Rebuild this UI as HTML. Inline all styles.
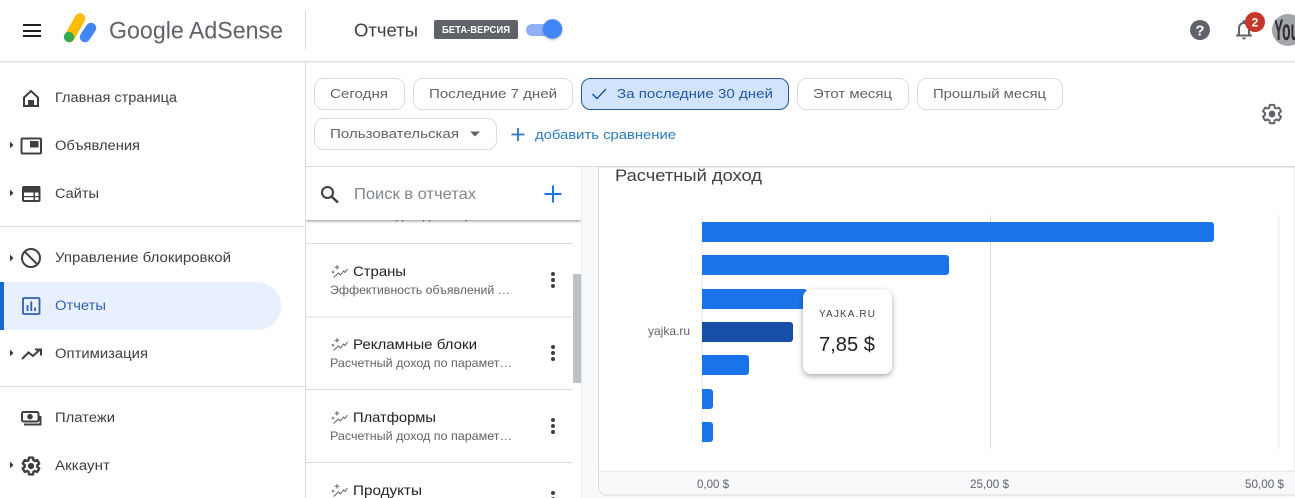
<!DOCTYPE html>
<html lang="ru"><head><meta charset="utf-8"><title>Google AdSense</title>
<style>
html,body{margin:0;padding:0;background:#fff;width:1295px;height:498px;overflow:hidden}
svg{display:block}
text{font-family:"Liberation Sans","Noto Sans CJK JP",sans-serif}
.nav{font-size:13.5px;fill:#3c4043}
.chip{font-size:13px;fill:#5f6368}
.ttl{font-size:14px;fill:#202124}
.sub{font-size:12px;fill:#5f6368}
.ax{font-size:12px;fill:#5f6368}
.cb{fill:#fff;stroke:#dadce0}
.bar{fill:#1a73e8}
.ic{fill:none;stroke:#3c4043;stroke-width:2}
.f{fill:#3c4043}
</style></head><body>
<svg xmlns="http://www.w3.org/2000/svg" width="1295" height="498" viewBox="0 0 1295 498">
<defs>
<filter id="sh" x="-30%" y="-30%" width="160%" height="170%"><feDropShadow dx="0" dy="2" stdDeviation="3" flood-color="#000" flood-opacity=".35"/></filter>
<filter id="sb" x="-5%" y="-20%" width="110%" height="150%"><feDropShadow dx="0" dy="1.5" stdDeviation="1.2" flood-color="#000" flood-opacity=".35"/></filter>
<filter id="kn" x="-50%" y="-50%" width="200%" height="200%"><feDropShadow dx="0" dy="1" stdDeviation="1.2" flood-color="#000" flood-opacity=".3"/></filter>
<clipPath id="av"><circle cx="1288" cy="30" r="16"/></clipPath>
<clipPath id="sbc"><rect x="306" y="220" width="275" height="8"/></clipPath>
<symbol id="spk" viewBox="0 0 16 13" overflow="visible">
<path d="M1.500 12.500L6.500 8l2 2 3-4 1.500 1.500L15.500 4" fill="none" stroke="#5f6368" stroke-width="1"/>
<path d="M5 0v4.600M2.700 2.300h4.600M1 5.800v2.600M-.3 7.100h2.600" fill="none" stroke="#5f6368" stroke-width="1"/>
</symbol>
<path id="gear" d="M19.14 12.94c.04-.3.06-.61.06-.94 0-.32-.02-.64-.07-.94l2.03-1.58c.18-.14.23-.41.12-.61l-1.92-3.32c-.12-.22-.37-.29-.59-.22l-2.39.96c-.5-.38-1.03-.7-1.62-.94l-.36-2.54c-.04-.24-.24-.41-.48-.41h-3.84c-.24 0-.43.17-.47.41l-.36 2.54c-.59.24-1.13.57-1.62.94l-2.39-.96c-.22-.08-.47 0-.59.22L2.74 8.87c-.12.21-.08.47.12.61l2.03 1.58c-.05.3-.09.63-.09.94s.02.64.07.94l-2.03 1.58c-.18.14-.23.41-.12.61l1.92 3.32c.12.22.37.29.59.22l2.39-.96c.5.38 1.03.7 1.62.94l.36 2.54c.05.24.24.41.48.41h3.84c.24 0 .44-.17.47-.41l.36-2.54c.59-.24 1.13-.56 1.62-.94l2.39.96c.22.08.47 0 .59-.22l1.92-3.32c.12-.22.07-.47-.12-.61l-2.01-1.58z"/>
</defs>

<!-- header -->
<rect x="0" y="61" width="1295" height="1.300" fill="#dadce0"/>
<rect x="305" y="10" width="1" height="40" fill="#dadce0"/>
<rect x="23" y="24" width="18" height="2" fill="#202124"/><rect x="23" y="30" width="18" height="2" fill="#202124"/><rect x="23" y="35" width="18" height="2" fill="#202124"/>
<line x1="80" y1="18.500" x2="69.500" y2="37" stroke="#fbbc04" stroke-width="10.500" stroke-linecap="round"/>
<circle cx="69" cy="37" r="5.200" fill="#34a853"/>
<line x1="91" y1="28" x2="85" y2="37" stroke="#4285f4" stroke-width="10.500" stroke-linecap="round"/>
<text x="109" y="38.500" font-size="24" fill="#5f6368" textLength="174" lengthAdjust="spacingAndGlyphs">Google AdSense</text>
<text x="354" y="36.500" font-size="18" fill="#3c4043" textLength="64" lengthAdjust="spacingAndGlyphs">Отчеты</text>
<rect x="434" y="20" width="84" height="19" rx="2" fill="#5f6368"/>
<text x="442" y="33" font-size="10" font-weight="bold" fill="#fff" textLength="68" lengthAdjust="spacingAndGlyphs">БЕТА-ВЕРСИЯ</text>
<rect x="526" y="24" width="30" height="12" rx="6" fill="#8fb1f5"/>
<circle cx="552.500" cy="29" r="9.700" fill="#4285f4" filter="url(#kn)"/>
<circle cx="1200" cy="30" r="10" fill="#5f6368"/>
<text x="1200" y="35.500" font-size="15" font-weight="bold" fill="#fff" text-anchor="middle">?</text>
<g transform="translate(1232,17.500)"><path fill="#5f6368" d="M12 22c1.100 0 2-.9 2-2h-4c0 1.100.9 2 2 2zm6-6v-5c0-3.070-1.630-5.640-4.500-6.320V4c0-.83-.67-1.500-1.500-1.500s-1.500.67-1.500 1.500v.68C7.640 5.360 6 7.920 6 11v5l-2 2v1h16v-1l-2-2zm-2 1H8v-6c0-2.480 1.510-4.500 4-4.500s4 2.020 4 4.500v6z"/></g>
<circle cx="1255" cy="22" r="10" fill="#c5362b"/>
<text x="1255" y="26.500" font-size="12" font-weight="bold" fill="#fff" text-anchor="middle">2</text>
<circle cx="1288" cy="30" r="16" fill="#a2a5a9"/>
<g clip-path="url(#av)"><text x="1274" y="40" font-size="30" font-weight="bold" fill="#2e2e2e" textLength="25" lengthAdjust="spacingAndGlyphs">You</text></g>

<!-- sidebar -->
<rect x="305" y="62" width="1" height="436" fill="#dadce0"/>
<rect x="0" y="226" width="305" height="1" fill="#dadce0"/>
<rect x="0" y="386" width="305" height="1" fill="#dadce0"/>
<path d="M0 282H257a24 24 0 0 1 0 48H0z" fill="#e8f0fe"/>
<rect x="0" y="282" width="4" height="48" fill="#1967d2"/>

<path d="M10 141.500l3.500 3.500-3.500 3.500zM10 189.500l3.500 3.500-3.500 3.500zM10 254.500l3.500 3.500-3.500 3.500zM10 349.500l3.500 3.500-3.500 3.500zM10 461.500l3.500 3.500-3.500 3.500z" fill="#3c4043"/>

<path class="ic" d="M24 106V97.500L31 91l7 6.500V106z"/><rect class="f" x="28" y="100" width="6" height="7"/>
<rect class="ic" x="21.500" y="138.500" width="19.500" height="15" rx="1"/><rect class="f" x="30" y="141" width="8.500" height="6.500"/>
<rect class="ic" x="23" y="187" width="16.500" height="14" rx="1"/><rect class="f" x="23" y="186" width="17" height="6.500"/><rect class="f" x="33.500" y="192" width="1.400" height="9"/><rect class="f" x="23" y="196" width="17" height="1.200"/>
<circle class="ic" cx="31" cy="258" r="9" stroke-width="2.200"/><line class="ic" x1="24.800" y1="251.800" x2="37.200" y2="264.200" stroke-width="2.200"/>
<rect x="23" y="298" width="16.500" height="16" rx="1" fill="none" stroke="#2f5fb3" stroke-width="1.800"/>
<path d="M27.500 311v-6M31.300 311v-9.500M35 311v-3.500" stroke="#2f5fb3" stroke-width="1.800" fill="none"/>
<path class="ic" d="M22 359l6.500-6.500 4.500 3.500 7-6.500M35 349.500h6v6"/>
<rect class="ic" x="22" y="412" width="16.500" height="9.500" rx="1.500"/><circle class="f" cx="30" cy="416.700" r="2.800"/><path class="ic" d="M24 424.500h16.500V416"/>
<g transform="translate(20.500,455.500) scale(.875)"><use href="#gear" fill="none" stroke="#3c4043" stroke-width="2.700"/><circle cx="12" cy="12" r="3.600" fill="#3c4043"/></g>

<text class="nav" x="55" y="102" textLength="122" lengthAdjust="spacingAndGlyphs">Главная страница</text>
<text class="nav" x="55" y="150" textLength="85" lengthAdjust="spacingAndGlyphs">Объявления</text>
<text class="nav" x="55" y="198" textLength="44" lengthAdjust="spacingAndGlyphs">Сайты</text>
<text class="nav" x="55" y="262" textLength="176" lengthAdjust="spacingAndGlyphs">Управление блокировкой</text>
<text class="nav" x="55" y="310" textLength="51" lengthAdjust="spacingAndGlyphs" style="fill:#2f5fb3">Отчеты</text>
<text class="nav" x="55" y="358" textLength="93" lengthAdjust="spacingAndGlyphs">Оптимизация</text>
<text class="nav" x="55" y="422" textLength="60" lengthAdjust="spacingAndGlyphs">Платежи</text>
<text class="nav" x="55" y="470" textLength="55" lengthAdjust="spacingAndGlyphs">Аккаунт</text>

<!-- filters -->
<rect class="cb" x="314.500" y="78.500" width="90" height="31" rx="9"/>
<rect class="cb" x="413.500" y="78.500" width="159" height="31" rx="9"/>
<rect x="581.500" y="78.500" width="207" height="31" rx="9" fill="#d2e3fc" stroke="#27579a"/>
<rect class="cb" x="797.500" y="78.500" width="111" height="31" rx="9"/>
<rect class="cb" x="917.500" y="78.500" width="145" height="31" rx="9"/>
<rect class="cb" x="314.500" y="118.500" width="182" height="31" rx="9"/>
<text class="chip" x="330" y="98" textLength="58" lengthAdjust="spacingAndGlyphs">Сегодня</text>
<text class="chip" x="429" y="98" textLength="128" lengthAdjust="spacingAndGlyphs">Последние 7 дней</text>
<path d="M592.500 94l4.500 4.500 9-9.500" fill="none" stroke="#1f5aa8" stroke-width="1.500"/>
<text class="chip" x="617" y="98" textLength="156" lengthAdjust="spacingAndGlyphs" style="fill:#2458a6">За последние 30 дней</text>
<text class="chip" x="813" y="98" textLength="79" lengthAdjust="spacingAndGlyphs">Этот месяц</text>
<text class="chip" x="933" y="98" textLength="113" lengthAdjust="spacingAndGlyphs">Прошлый месяц</text>
<text class="chip" x="330" y="138" textLength="129" lengthAdjust="spacingAndGlyphs">Пользовательская</text>
<path d="M470 131.500h10l-5 5z" fill="#5f6368"/>
<path d="M518 128v13M511.500 134.500h13" stroke="#2b7bc4" stroke-width="1.800" fill="none"/>
<text x="535" y="139" font-size="13" fill="#2b7bc4" textLength="141" lengthAdjust="spacingAndGlyphs">добавить сравнение</text>
<g transform="translate(1260.500,102.500) scale(.96)"><use href="#gear" fill="none" stroke="#5f6368" stroke-width="2"/><circle cx="12" cy="12" r="3.500" fill="#5f6368"/></g>
<rect x="306" y="166" width="989" height="1" fill="#dadce0"/>

<!-- gutter + chart -->
<rect x="582" y="167" width="713" height="331" fill="#f8f9fa"/>
<rect x="581" y="167" width="1" height="331" fill="#e8eaed"/>
<path d="M598.500 167V487a8 8 0 0 0 8 8H1295V167z" fill="#fff" stroke="#dadce0"/>
<path d="M599 472H1295V494.500H606.500a7.500 7.500 0 0 1-7.500-7.500z" fill="#f8f9fa"/>
<rect x="599" y="470.500" width="696" height="1.500" fill="#e8eaed"/>
<text x="615" y="181" font-size="17" fill="#3c4043" textLength="147" lengthAdjust="spacingAndGlyphs">Расчетный доход</text>
<rect x="701.500" y="215" width="1" height="234" fill="#e8eaed"/>
<rect x="990" y="215" width="1" height="234" fill="#dadce0"/>
<rect x="1278.500" y="215" width="1" height="234" fill="#e8eaed"/>
<path class="bar" d="M702 222H1211a3 3 0 0 1 3 3V239a3 3 0 0 1-3 3H702z"/>
<path class="bar" d="M702 255H946a3 3 0 0 1 3 3V272a3 3 0 0 1-3 3H702z"/>
<path class="bar" d="M702 289H804a3 3 0 0 1 3 3V306a3 3 0 0 1-3 3H702z"/>
<path d="M702 322H790a3 3 0 0 1 3 3V339a3 3 0 0 1-3 3H702z" fill="#174ea6"/>
<path class="bar" d="M702 355H746a3 3 0 0 1 3 3V372a3 3 0 0 1-3 3H702z"/>
<path class="bar" d="M702 389H710a3 3 0 0 1 3 3V406a3 3 0 0 1-3 3H702z"/>
<path class="bar" d="M702 422H710a3 3 0 0 1 3 3V439a3 3 0 0 1-3 3H702z"/>
<text class="ax" x="648" y="335" textLength="42" lengthAdjust="spacingAndGlyphs">yajka.ru</text>
<text class="ax" x="697" y="488" textLength="32" lengthAdjust="spacingAndGlyphs">0,00 $</text>
<text class="ax" x="970" y="488" textLength="39" lengthAdjust="spacingAndGlyphs">25,00 $</text>
<text class="ax" x="1245" y="488" textLength="39" lengthAdjust="spacingAndGlyphs">50,00 $</text>
<rect x="803" y="289.500" width="89" height="84.500" rx="8" fill="#fff" filter="url(#sh)"/>
<text x="819" y="317" font-size="10" fill="#3c4043" textLength="56" lengthAdjust="spacing">YAJKA.RU</text>
<text x="819" y="351" font-size="20" fill="#202124" textLength="56" lengthAdjust="spacingAndGlyphs">7,85 $</text>

<!-- report list -->
<rect x="306" y="167" width="275" height="331" fill="#fff"/>
<rect x="573" y="274" width="8" height="109" fill="#bdc1c6"/>
<g fill="#dadce0"><rect x="306" y="243" width="267" height="1"/><rect x="306" y="316.500" width="267" height="1"/><rect x="306" y="389" width="267" height="1"/><rect x="306" y="462" width="267" height="1"/></g>
<text class="sub" x="330" y="219" textLength="182" lengthAdjust="spacingAndGlyphs">Расчетный доход по парамет…</text>
<g clip-path="url(#sbc)"><rect x="306" y="167" width="275" height="53" fill="#fff" filter="url(#sb)"/></g>
<rect x="306" y="167" width="275" height="53" fill="#fff"/>
<circle cx="327.500" cy="192.500" r="5.500" fill="none" stroke="#3c4043" stroke-width="2"/><line x1="331.500" y1="196.500" x2="338" y2="202.500" stroke="#3c4043" stroke-width="2.400"/>
<text x="354" y="199" font-size="16" fill="#80868b" textLength="122" lengthAdjust="spacingAndGlyphs">Поиск в отчетах</text>
<path d="M553 185.500v17M544.500 194h17" stroke="#1a73e8" stroke-width="2" fill="none"/>

<use href="#spk" x="332" y="265" width="16" height="13"/>
<text class="ttl" x="353" y="276" textLength="53" lengthAdjust="spacingAndGlyphs">Страны</text>
<text class="sub" x="330" y="294" textLength="180" lengthAdjust="spacingAndGlyphs">Эффективность объявлений …</text>
<use href="#spk" x="332" y="338" width="16" height="13"/>
<text class="ttl" x="353" y="349" textLength="124" lengthAdjust="spacingAndGlyphs">Рекламные блоки</text>
<text class="sub" x="330" y="367" textLength="182" lengthAdjust="spacingAndGlyphs">Расчетный доход по парамет…</text>
<use href="#spk" x="332" y="411" width="16" height="13"/>
<text class="ttl" x="353" y="422" textLength="83" lengthAdjust="spacingAndGlyphs">Платформы</text>
<text class="sub" x="330" y="440" textLength="182" lengthAdjust="spacingAndGlyphs">Расчетный доход по парамет…</text>
<use href="#spk" x="332" y="484" width="16" height="13"/>
<text class="ttl" x="353" y="495" textLength="69" lengthAdjust="spacingAndGlyphs">Продукты</text>
<g fill="#3c4043">
<circle cx="553" cy="274" r="2"/><circle cx="553" cy="280" r="2"/><circle cx="553" cy="286" r="2"/>
<circle cx="553" cy="347" r="2"/><circle cx="553" cy="353" r="2"/><circle cx="553" cy="359" r="2"/>
<circle cx="553" cy="420" r="2"/><circle cx="553" cy="426" r="2"/><circle cx="553" cy="432" r="2"/>
<circle cx="553" cy="493" r="2"/><circle cx="553" cy="499" r="2"/>
</g>
</svg>
</body></html>
